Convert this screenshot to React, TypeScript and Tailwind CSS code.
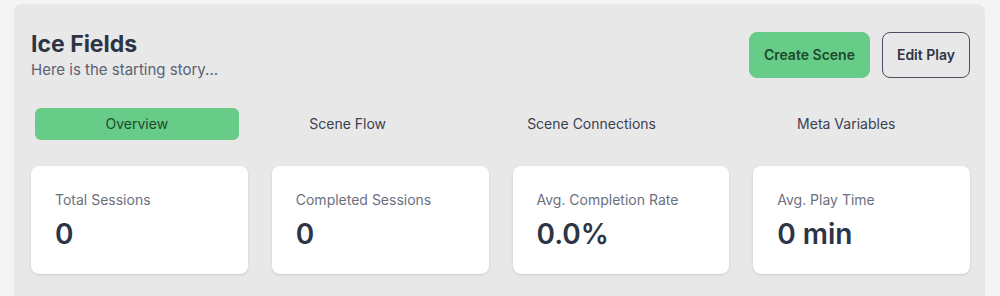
const tabs = ['Overview', 'Scene Flow', 'Scene Connections', 'Meta Variables'];

const stats = [
    { label: 'Total Sessions', value: '0' },
    { label: 'Completed Sessions', value: '0' },
    { label: 'Avg. Completion Rate', value: '0.0%' },
    { label: 'Avg. Play Time', value: '0 min' },
];

const App = () => {
    return (
        <div className="min-h-screen bg-[#f4f4f4] pl-[14px] pr-[15px] pt-[4px] font-['Inter',sans-serif]">
            <div className="rounded-lg bg-[#e8e8e8] pl-[17px] pr-[15px] pt-6 pb-8">

                {/* Header */}
                <div className="flex items-center justify-between">
                    <div>
                        <h1 className="text-[23px] leading-8 font-bold text-[#2d3446]">Ice Fields</h1>
                        <p className="text-[15px] leading-5 text-[#5b6170]">Here is the starting story...</p>
                    </div>
                    <div className="flex gap-3 pt-[2px]">
                        <button className="rounded-lg border border-[#66cc88] bg-[#66cc88] px-[14px] py-3 text-sm font-semibold text-[#1d4a2c]">
                            Create Scene
                        </button>
                        <button className="rounded-lg border border-[#4b5060] px-[14px] py-3 text-sm font-semibold text-[#2d3446]">
                            Edit Play
                        </button>
                    </div>
                </div>

                {/* Tabs */}
                <div className="mt-6 flex p-1">
                    {tabs.map((tab, i) => (
                        <button
                            key={tab}
                            className={`flex-auto rounded-md py-1.5 text-sm ${
                                i === 0 ? 'bg-[#66cc88] text-[#1d4a2c]' : 'text-[#3b4150]'
                            }`}
                        >
                            {tab}
                        </button>
                    ))}
                </div>

                {/* Stats */}
                <div className="mt-[22px] grid grid-cols-4 gap-6">
                    {stats.map((s) => (
                        <div key={s.label} className="rounded-lg bg-white px-6 pt-6 pb-[22px] shadow-sm">
                            <p className="text-sm text-[#6b7080]">{s.label}</p>
                            <p className="mt-1.5 text-[28px] leading-9 font-semibold text-[#2d3446]">{s.value}</p>
                        </div>
                    ))}
                </div>

            </div>
        </div>
    );
};

export default App;
